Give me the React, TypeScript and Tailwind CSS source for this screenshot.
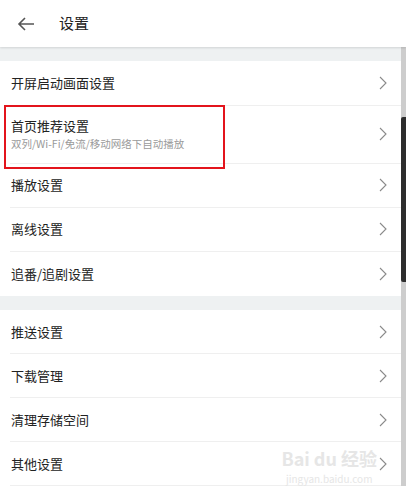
import type React from "react"

type Item = { title: string; sub?: string; marked?: boolean }

const groupA: Item[] = [
  { title: "开屏启动画面设置" },
  { title: "首页推荐设置", sub: "双列/Wi-Fi/免流/移动网络下自动播放", marked: true },
  { title: "播放设置" },
  { title: "离线设置" },
  { title: "追番/追剧设置" },
]

const groupB: Item[] = [
  { title: "推送设置" },
  { title: "下载管理" },
  { title: "清理存储空间" },
  { title: "其他设置" },
]

const Chevron = () => (
  <svg width="8" height="14" viewBox="0 0 8 14" fill="none" className="shrink-0">
    <path d="M1 1l6 6-6 6" stroke="#8a8a8a" strokeWidth="1.1" strokeLinejoin="miter" />
  </svg>
)

const Row: React.FC<{ item: Item; last?: boolean; first?: boolean }> = ({ item, last, first }) => (
  <div className="relative pl-[10px]">
    <div
      className={`flex items-center justify-between pr-[14px] ${
        item.sub ? "h-[58px]" : first ? "h-[45px]" : "h-[44px]"
      } ${last ? "" : "border-b border-[#efefef]"}`}
    >
      <div className="flex flex-col pl-[1px]">
        <span className="text-[13px] leading-[18px] text-[#222]">{item.title}</span>
        {item.sub && <span className="text-[10.5px] leading-[15px] text-[#9a9a9a] mt-[1px]">{item.sub}</span>}
      </div>
      <Chevron />
    </div>
    {item.marked && (
      <div className="absolute left-[4px] top-[-1px] w-[221px] h-[64px] border-2 border-[#e3141c] pointer-events-none" />
    )}
  </div>
)

export default function App() {
  return (
    <div
      className="w-[406px] h-[486px] overflow-hidden bg-white"
      style={{ fontFamily: '"Noto Sans CJK SC", "Noto Sans", sans-serif' }}
    >
      {/* header */}
      <div className="h-[47px] flex items-center gap-[24px] pl-[17px] bg-white shadow-[0_1px_2px_rgba(0,0,0,0.12)] relative z-10">
        <svg width="18" height="14" viewBox="0 0 18 14" fill="none" className="shrink-0">
          <path d="M17 7H2M8 1L2 7l6 6" stroke="#555" strokeWidth="1.6" />
        </svg>
        <span className="text-[15px] text-[#222]">设置</span>
      </div>

      <div className="flex h-[439px]">
        <div className="flex-1 flex flex-col">
          <div className="h-[15px] bg-[#eef1f2]" />
          {groupA.map((it, i) => (
            <Row key={it.title} item={it} first={i === 0} last={i === groupA.length - 1} />
          ))}
          <div className="h-[16px] bg-[#eef1f2]" />
          {groupB.map((it) => (
            <Row key={it.title} item={it} />
          ))}
          {/* watermark */}
          <div className="relative">
            <div className="absolute right-[24px] bottom-[2px] flex flex-col items-center text-[#e6e6e6] select-none">
              <span className="text-[18px] leading-[19px] font-bold">Bai du 经验</span>
              <span className="text-[10px] leading-[11px] mt-[5px]">jingyan.baidu.com</span>
            </div>
          </div>
        </div>
        {/* scrollbar */}
        <div className="w-[5px] bg-[#cdcdcd] flex flex-col">
          <div className="h-[70px]" />
          <div className="h-[165px] bg-[#2e2e2e] rounded-l-[2px]" />
        </div>
      </div>
    </div>
  )
}
